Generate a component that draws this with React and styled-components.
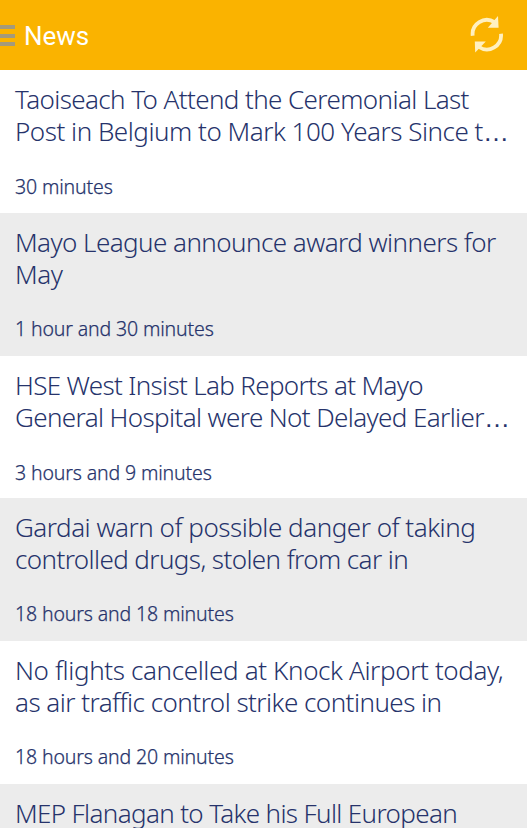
import React from "react";
import styled, { createGlobalStyle } from "styled-components";

const COLORS = {
  amber: "#fab300",
  cream: "#fff0c0",
  menu: "#a39a7c",
  navy: "#26336b",
  white: "#ffffff",
  gray: "#ececec",
};

const STORIES = [
  {
    id: "taoiseach",
    lines: [
      { text: "Taoiseach To Attend the Ceremonial Last", spacing: -0.6 },
      {
        text: "Post in Belgium to Mark 100 Years Since t",
        clipped: true,
        spacing: -0.48,
      },
    ],
    age: "30 minutes",
  },
  {
    id: "mayo-league",
    lines: [
      { text: "Mayo League announce award winners for", spacing: -0.56 },
      { text: "May", spacing: -0.4 },
    ],
    age: "1 hour and 30 minutes",
  },
  {
    id: "hse-west",
    lines: [
      { text: "HSE West Insist Lab Reports at Mayo", spacing: -0.66 },
      {
        text: "General Hospital were Not Delayed Earlier",
        clipped: true,
        spacing: -0.62,
      },
    ],
    age: "3 hours and 9 minutes",
  },
  {
    id: "gardai",
    lines: [
      { text: "Gardai warn of possible danger of taking", spacing: -0.48 },
      { text: "controlled drugs, stolen from car in", spacing: -0.6 },
    ],
    age: "18 hours and 18 minutes",
  },
  {
    id: "knock-airport",
    lines: [
      { text: "No flights cancelled at Knock Airport today,", spacing: -0.37 },
      { text: "as air traffic control strike continues in", spacing: -0.53 },
    ],
    age: "18 hours and 20 minutes",
  },
  {
    id: "flanagan",
    lines: [
      { text: "MEP Flanagan to Take his Full European", spacing: -0.64 },
    ],
    age: "",
  },
];

const RefreshIcon = () => (
  <svg width="34" height="38" viewBox="0 0 34 38" aria-hidden="true">
    <path
      d="M2.7 19.8A14.2 14.2 0 0 1 24.5 6.2"
      fill="none"
      stroke={COLORS.cream}
      strokeWidth="3.8"
    />
    <path d="M28 0L28.6 11.8H17.8Z" fill={COLORS.cream} />
    <path
      d="M31 17.8A14.2 14.2 0 0 1 9 31"
      fill="none"
      stroke={COLORS.cream}
      strokeWidth="3.8"
    />
    <path d="M5.2 36.5L4.8 25.5H15.8Z" fill={COLORS.cream} />
  </svg>
);

const StoryItem = ({ lines, age }) => (
  <Story>
    <Headline>
      {lines.map(({ text, spacing, clipped }) => (
        <HeadlineLine key={text} $spacing={spacing}>
          {text}
          {clipped && <Ellipsis>…</Ellipsis>}
        </HeadlineLine>
      ))}
    </Headline>
    {age && <Age>{age}</Age>}
  </Story>
);

const App = () => {
  return (
    <Screen>
      <GlobalStyle />
      <Header>
        <MenuButton aria-label="Menu">
          <MenuBar />
          <MenuBar />
          <MenuBar />
        </MenuButton>
        <Title>News</Title>
        <RefreshButton aria-label="Refresh">
          <RefreshIcon />
        </RefreshButton>
      </Header>
      <StoryList>
        {STORIES.map((story) => (
          <StoryItem key={story.id} {...story} />
        ))}
      </StoryList>
    </Screen>
  );
};

const GlobalStyle = createGlobalStyle`
  *, *::before, *::after {
    box-sizing: border-box;
  }

  body {
    margin: 0;
    overflow: hidden;
  }
`;

const Screen = styled.div`
  display: flex;
  flex-direction: column;
  height: 100vh;
  overflow: hidden;
  background: ${COLORS.white};
  color: ${COLORS.navy};
  font-family: "Noto Sans", sans-serif;
`;

const Header = styled.header`
  flex: none;
  display: flex;
  align-items: center;
  height: 70px;
  padding-right: 23px;
  background: ${COLORS.amber};
`;

const MenuButton = styled.button`
  display: flex;
  flex-direction: column;
  gap: 4.7px;
  width: 15px;
  margin-top: 1px;
  padding: 0;
  border: 0;
  background: none;
`;

const MenuBar = styled.span`
  height: 4px;
  background: ${COLORS.menu};
`;

const Title = styled.h1`
  flex: 1;
  margin: 2px 0 0 9px;
  color: ${COLORS.white};
  font-family: Roboto, sans-serif;
  font-size: 26px;
  font-weight: 400;
  line-height: 32px;
`;

const RefreshButton = styled.button`
  display: flex;
  padding: 0;
  border: 0;
  background: none;
`;

const StoryList = styled.ul`
  margin: 0;
  padding: 0;
  list-style: none;
`;

const Story = styled.li`
  height: 142.8px;
  padding: 13px 15px 0;
  white-space: nowrap;

  &:nth-child(even) {
    background: ${COLORS.gray};
  }
`;

const Headline = styled.h2`
  margin: 0;
  font-size: 26px;
  font-weight: 300;
  line-height: 32px;
`;

const HeadlineLine = styled.span`
  display: block;
  width: max-content;
  letter-spacing: ${(p) => p.$spacing}px;
`;

const Ellipsis = styled.span`
  font-family: "Liberation Sans", sans-serif;
  letter-spacing: 0;
`;

const Age = styled.p`
  margin: 27px 0 0;
  font-size: 19.5px;
  font-weight: 300;
  line-height: 24px;
  letter-spacing: -0.14px;
  -webkit-text-stroke: 0.25px ${COLORS.navy};
`;

export default App;
